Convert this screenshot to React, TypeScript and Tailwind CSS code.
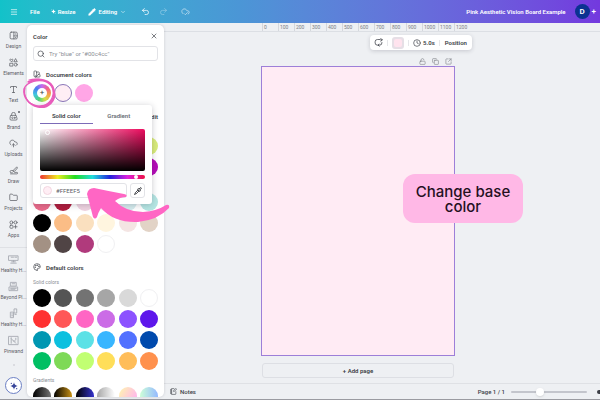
import {
    Clock, CloudCheck, CloudUpload, Copy, Folder, Menu, NotebookPen, Palette, Pencil, Pipette, Redo2, Search,
    SquareArrowOutUpRight, SwatchBook, ChevronDown, LockOpen, Type, Undo2, X
} from "lucide-react"
import { clsx } from "clsx"

type IconProps = { size?: number }

const Line: React.FC<IconProps & { children: React.ReactNode }> = ({ size = 9, children }) => (
    <svg width={size} height={size} viewBox="0 0 24 24" fill="none" stroke="currentColor" strokeWidth="2" strokeLinecap="round" strokeLinejoin="round">
        {children}
    </svg>
)

const DesignIcon = () => (
    <Line>
        <rect x="3" y="3" width="19" height="18" rx="3" />
        <path d="M13 3v18M13 13h9M17 8h1M17 17h1" />
    </Line>
)

const ElementsIcon = () => (
    <Line>
        <path d="M6.5 10L2.8 6.2C1 4 4 1.5 6.5 4C9 1.5 12 4 10.2 6.2ZM18 2.5l4 7.5h-8ZM3 14h7.5v7.5H3z" />
        <circle cx="18" cy="17.8" r="3.9" />
    </Line>
)

const BrandIcon = () => (
    <Line>
        <path d="M7 9V6a5 5 0 0 1 10 0v3M5 9h14l2.5 9a3 3 0 0 1-3 3.500H5.500a3 3 0 0 1-3-3.500Z" />
        <path d="M10.500 14a2 2 0 1 0 0 3" />
        <circle cx="15" cy="15.500" r="1.500" />
    </Line>
)

const DrawIcon = () => (
    <Line>
        <path d="M20 3l-8 8-1 4 4-1 7-8ZM10 12H6a3 3 0 0 0 0 6h3M4 21h17a2 2 0 0 0 0-4h-6" />
    </Line>
)

const AppsIcon = () => (
    <Line>
        <circle cx="6.500" cy="6.500" r="4" />
        <circle cx="17.500" cy="6.500" r="4" />
        <rect x="2.500" y="14" width="8" height="8" rx="2" />
        <path d="M17.500 14v8M13.500 18h8" />
    </Line>
)

const ReplaceIcon = () => (
    <Line size={9}>
        <path d="M15 4H9a6 6 0 0 0-6 6v3a6 6 0 0 0 6 6h3M18 1l4 4-4 4M22 5h-5M21 12v1a6 6 0 0 1-6 6h-3M14 16l-3 3 3 3" />
    </Line>
)

const Spark: React.FC<IconProps> = ({ size = 6 }) => (
    <svg width={size} height={size} viewBox="0 0 24 24" fill="currentColor">
        <path d="M12 1Q13.500 10.500 23 12Q13.500 13.500 12 23Q10.500 13.500 1 12Q10.500 10.500 12 1Z" />
        <circle cx="4" cy="4" r="2" />
        <circle cx="20" cy="20" r="2" />
    </svg>
)

type NavItem = {
    label: string
    icon: React.ReactNode
    badge?: boolean
}

const navItems: NavItem[] = [
    { label: "Design", icon: <DesignIcon /> },
    { label: "Elements", icon: <ElementsIcon /> },
    { label: "Text", icon: <Type size={9} /> },
    { label: "Brand", icon: <BrandIcon />, badge: true },
    { label: "Uploads", icon: <CloudUpload size={9} /> },
    { label: "Draw", icon: <DrawIcon /> },
    { label: "Projects", icon: <Folder size={9} /> },
    { label: "Apps", icon: <AppsIcon /> },
]

// faint page thumbnails of the recent designs
const recentItems = [
    { label: "Healthy H...", d: "M2 4h20v10H2zM7 7h5M15 7h4M8 17h8M6 20h12M12 14v3" },
    { label: "Beyond Pl...", d: "M6 3h12v8H6zM3 13h18v8H3zM9 6h6M6 16h12M6 18h9" },
    { label: "Healthy H...", d: "M14 2h5v9h-5zM6 9h6v12H6zM8 13h2M8 17h2M15 14h3" },
    { label: "Pinwand", d: "M2 3h20v18H2zM7 6v12M7 8l5 5 5 5M12 13h4M17 7v3" },
]

const swatchRows = {
    first: [
        ["#ffffff", "#ffffff", "#ffffff", "#ffffff", "#ffffff", "#d9ec7a"],
        ["#ffffff", "#ffffff", "#ffffff", "#ffffff", "#ffffff", "#b50cb8"],
    ],
    second: [
        ["#ea6a8a", "#b01c3c", "#efd3e0", "#fbe3ec", "#d5ecee", "#b5e6e3"],
        ["#000000", "#fbbd86", "#fae0bf", "#fff5df", "#f4e5e3", "#e2d3c6"],
        ["#a39184", "#504445", "#b03a7c", "#ffffff"],
    ],
    solid: [
        ["#000000", "#545454", "#737373", "#a6a6a6", "#d9d9d9", "#ffffff"],
        ["#ff3131", "#ff5757", "#ff66c4", "#cb6ce6", "#8c52ff", "#5e17eb"],
        ["#0097b2", "#0cc0df", "#5ce1e6", "#38b6ff", "#5271ff", "#004aad"],
        ["#00bf63", "#7ed957", "#c1ff72", "#ffde59", "#ffbd59", "#ff914d"],
    ],
    gradients: [[
        "linear-gradient(90deg,#000000,#737373)",
        "linear-gradient(90deg,#000000,#c89116)",
        "linear-gradient(90deg,#000000,#3533cd)",
        "linear-gradient(90deg,#a6a6a6,#ffffff)",
        "linear-gradient(120deg,#fff7ad,#ffa9f9)",
        "linear-gradient(90deg,#cdffd8,#94b9ff)",
    ]],
}

const rulerMarks = [0, 100, 200, 300, 400, 500, 600, 700, 800, 900, 1000, 1100, 1200]

const Swatches: React.FC<{ rows: string[][] }> = ({ rows }) => (
    <div className="flex flex-col gap-[3px]">
        {rows.map((row, index) => (
            <div key={index} className="grid grid-cols-[18px_18px_18px_18px_18px_18px] justify-between">
                {row.map((color, i) => (
                    <button
                        key={i}
                        aria-label={`Use ${color}`}
                        className={clsx("size-[18px] rounded-full", color === "#ffffff" && "border border-[#f0f0f2]")}
                        style={{ background: color }}
                    />
                ))}
            </div>
        ))}
    </div>
)

const Header = () => (
    <header className="flex h-[23px] shrink-0 items-center bg-linear-to-r from-[#12c2c9] via-[#4b96d6] via-40% to-[#7339de] pl-[10px] pr-1 text-[6px] font-semibold text-white">
        <button aria-label="Menu"><Menu size={8} /></button>
        <button className="ml-3">File</button>
        <button className="ml-[11px] flex items-center gap-[2px]"><Spark size={5} />Resize</button>
        <button className="ml-3 flex items-center gap-[3px]"><Pencil size={8} fill="white" />Editing<ChevronDown size={6} /></button>
        <button aria-label="Undo" className="ml-[15px]"><Undo2 size={9} /></button>
        <button aria-label="Redo" className="ml-[9px] opacity-40"><Redo2 size={9} /></button>
        <CloudCheck size={9} className="ml-[13px] opacity-70" />
        <h1 className="ml-auto">Pink Aesthetic Vision Board Example</h1>
        <button className="ml-[9px] size-[15px] rounded-full bg-[#0b3291] text-[8px]">D</button>
        <button aria-label="Add member" className="ml-[2px] text-[8px]">+</button>
    </header>
)

const Sidebar = () => (
    <nav className="flex w-[27px] shrink-0 flex-col items-center overflow-hidden pt-2 text-[5px] leading-[6px] text-[#5d6067]">
        {navItems.map(({ label, icon, badge }) => (
            <button key={label} className="relative flex h-[27px] shrink-0 flex-col items-center gap-[3px]">
                {icon}
                {label}
                {badge && <span className="absolute right-0 -top-px size-[2px] rounded-full bg-[#5d6067]" />}
            </button>
        ))}
        <hr className="w-full shrink-0 border-[#dfe1e5]" />
        <div className="flex flex-col items-center pt-[6px]">
            {recentItems.map(({ label, d }, index) => (
                <button key={index} className="flex h-[27px] shrink-0 flex-col items-center gap-[2px] whitespace-nowrap">
                    <span className="text-[#a9acb3]"><Line size={11}><path d={d} /></Line></span>
                    {label}
                </button>
            ))}
        </div>
        <span className="mt-[2px] size-[2px] shrink-0 rounded-full bg-[#d3d5da]" />
        <button aria-label="Assistant" className="mb-[5px] mt-auto flex size-[17px] shrink-0 items-center justify-center rounded-full border border-[#6b7fc4] bg-white text-[#39469a]">
            <Spark size={8} />
        </button>
    </nav>
)

const ColorPicker = () => (
    <div className="absolute left-[6px] top-20 z-10 w-[119px] rounded-[3px] bg-white px-[7px] pb-[6px] pt-1 shadow-[0_1px_6px_rgba(40,40,60,0.25)]">
        <div role="tablist" className="grid grid-cols-2 text-center text-[6px] font-semibold leading-[14px]">
            <button role="tab" aria-selected="true" className="border-b border-[#7c6bb8] text-[#3b3e45]">Solid color</button>
            <button role="tab" aria-selected="false" className="border-b border-transparent text-[#6c6f76]">Gradient</button>
        </div>
        <div className="mt-[5px] h-[42px] rounded-[2px] bg-[linear-gradient(to_top,#000,transparent),linear-gradient(to_right,#fff,#ec0b5e)] p-px">
            <span className="block size-[5px] translate-x-1 rounded-full border border-white" />
        </div>
        <input
            type="range"
            aria-label="Hue"
            min={0}
            max={360}
            defaultValue={335}
            className="mt-1 block h-[4px] w-full appearance-none rounded-full bg-[linear-gradient(90deg,#e33,#ee2,#2d2,#2dd,#22d,#d2d,#e14)] [&::-webkit-slider-thumb]:size-[4px] [&::-webkit-slider-thumb]:appearance-none [&::-webkit-slider-thumb]:rounded-full [&::-webkit-slider-thumb]:bg-white"
        />
        <div className="mt-1 flex gap-[3px]">
            <label className="flex h-[15px] min-w-0 flex-1 items-center gap-1 rounded-[3px] border border-[#e2e3e7] px-[2px]">
                <span className="size-[9px] shrink-0 rounded-full border border-[#f3d6e0] bg-[#ffeef5]" />
                <input aria-label="Hex color" defaultValue="#FFEEF5" className="w-full min-w-0 text-[6px] text-[#5d6067] outline-none" />
            </label>
            <button aria-label="Pick a color" className="flex size-[15px] items-center justify-center rounded-[3px] border border-[#e2e3e7] text-[#22242a]">
                <Pipette size={8} strokeWidth={2.5} />
            </button>
        </div>
    </div>
)

const Arrow = () => (
    <svg viewBox="0 0 84 36" className="absolute left-[59px] top-[162px] z-20 h-9 w-[84px]" fill="#ff66c4">
        <path d="M1 7Q2 1 8 1Q22 4 38 7Q42 8 40 10Q34 10 29 14Q40 25 57 25Q71 24 80 18Q84 17 83 21Q72 33 52 35Q28 36 15 21Q12 26 11 30Q9 33 7 30Q4 18 1 7Z" />
    </svg>
)

const Scribble = () => (
    <svg viewBox="0 0 36 34" className="absolute -left-[5px] top-[52px] z-20 h-[34px] w-9" fill="none" stroke="#e85cbb" strokeLinecap="round">
        <path strokeWidth="1.5" d="M6 5C15 0 30 2 32 13C35 24 26 32 16 30C6 28 1 19 2 12C5 4 17 2 25 5C34 10 34 22 26 27C19 31 9 29 5 23" />
        <path strokeWidth="1.2" d="M7 3C15 1 27 3 30 10C33 17 30 26 21 29M3 11C1 19 6 26 12 28" />
    </svg>
)

const ColorPanel = () => (
    <aside className="relative mb-[2px] mt-[2px] w-[137px] shrink-0">
        <div className="flex h-full flex-col overflow-hidden rounded-[5px] bg-white px-[6px] pt-[6px] text-[6px] text-[#3b3e45] shadow-[0_0_3px_rgba(40,40,60,0.18)]">
            <div className="flex h-[10px] shrink-0 items-center justify-between">
                <h2 className="font-semibold">Color</h2>
                <button aria-label="Close"><X size={8} /></button>
            </div>
            <label className="mt-[5px] flex h-[15px] shrink-0 items-center gap-1 rounded-[3px] border border-[#e2e3e7] px-[3px]">
                <Search size={8} className="shrink-0" />
                <input aria-label="Search colors" placeholder={"Try \"blue\" or \"#00c4cc\""} className="w-full min-w-0 outline-none placeholder:text-[#8c8f96]" />
            </label>
            <h3 className="mt-2 flex h-[10px] shrink-0 items-center gap-[5px] font-semibold"><SwatchBook size={8} />Document colors</h3>
            <div className="mt-[5px] flex shrink-0 gap-[3px]">
                <button aria-label="Add a color" className="flex size-[18px] items-center justify-center rounded-full bg-[conic-gradient(#c46bf0,#f0628a,#f5a04a,#d5e04a,#4fd07a,#3fc6e0,#4a7cf0,#c46bf0)]">
                    <span className="flex size-[10px] items-center justify-center rounded-full bg-white text-[8px] leading-none">+</span>
                </button>
                <button aria-label="Use #ffeef5" className="size-[18px] rounded-full border border-[#8a76b8] bg-[#ffeef5]" />
                <button aria-label="Use #ffa6e6" className="size-[18px] rounded-full bg-[#ffa6e6]" />
            </div>
            <button className="mt-[9px] h-[10px] shrink-0 self-end font-semibold">Edit</button>
            <div className="mt-4 shrink-0"><Swatches rows={swatchRows.first} /></div>
            <div className="mt-[17px] shrink-0"><Swatches rows={swatchRows.second} /></div>
            <h3 className="mt-[9px] flex h-[10px] shrink-0 items-center gap-[5px] font-semibold"><Palette size={8} />Default colors</h3>
            <h4 className="mt-[5px] h-[10px] shrink-0 text-[5px] leading-[10px] text-[#8c8f96]">Solid colors</h4>
            <div className="mt-[2px] shrink-0"><Swatches rows={swatchRows.solid} /></div>
            <h4 className="mt-[5px] h-[10px] shrink-0 text-[5px] leading-[10px] text-[#8c8f96]">Gradients</h4>
            <div className="mt-[2px] shrink-0"><Swatches rows={swatchRows.gradients} /></div>
        </div>
        <ColorPicker />
        <Scribble />
        <Arrow />
    </aside>
)

const Toolbar = () => (
    <div className="flex h-[15px] items-center gap-[4px] rounded-[4px] bg-white px-1 text-[6px] font-semibold text-[#3b3e45] shadow-[0_1px_4px_rgba(40,40,60,0.2)]">
        <button aria-label="Replace"><ReplaceIcon /></button>
        <span className="h-[6px] w-px bg-[#e6e7ea]" />
        <button aria-label="Background color" className="flex size-[12px] items-center justify-center rounded-[3px] bg-[#e6dfe6]">
            <span className="size-[8px] rounded-[2px] bg-[#ffe3ee]" />
        </button>
        <span className="h-[6px] w-px bg-[#e6e7ea]" />
        <button className="flex items-center gap-[2px]"><Clock size={8} />5.0s</button>
        <span className="h-[6px] w-px bg-[#e6e7ea]" />
        <button className="px-px">Position</button>
    </div>
)

const Canvas = () => (
    <main className="flex min-w-0 flex-1 flex-col">
        <div className="flex h-[9px] shrink-0 border-b border-[#dcdfe4] pl-[98px] text-[5px] leading-[8px] text-[#7d8087]">
            {rulerMarks.map(mark => (
                <span key={mark} className="w-4 shrink-0 border-l border-[#d5d8dd] pl-px">{mark}</span>
            ))}
        </div>
        <div className="flex min-h-0 flex-1 flex-col items-center pr-12">
            <div className="ml-[126px] mt-[3px]"><Toolbar /></div>
            <div className="mt-2 flex w-[194px] justify-end gap-[6px] pr-[3px] text-[#7d8087]">
                <LockOpen size={7} /><Copy size={7} /><SquareArrowOutUpRight size={7} />
            </div>
            <div className="relative mt-px w-[194px] flex-1 border border-[#9d7fd8] bg-[#ffebf4]">
                <p className="absolute left-[141px] top-[107px] flex h-[49px] w-[120px] items-center justify-center rounded-[12px] bg-[#ffb8e6] text-center font-['Inter',sans-serif] text-[15px] font-medium leading-[15px] text-[#24101e]">
                    Change base<br />color
                </p>
            </div>
            <button className="mb-[5px] mt-[7px] h-[15px] w-48 rounded-[3px] border border-[#dddfe4] text-[6px] font-semibold text-[#3b3e45]">+ Add page</button>
        </div>
        <footer className="flex h-4 shrink-0 items-center border-t border-[#dfe1e5] pl-[6px] text-[6px] font-medium text-[#3b3e45]">
            <button className="flex items-center gap-[3px]"><NotebookPen size={7} />Notes</button>
            <span className="ml-auto">Page 1 / 1</span>
            <input type="range" aria-label="Zoom" defaultValue={37} className="ml-[6px] h-[2px] w-[76px] appearance-none rounded-full bg-[#c3c5cc] [&::-webkit-slider-thumb]:size-2 [&::-webkit-slider-thumb]:appearance-none [&::-webkit-slider-thumb]:rounded-full [&::-webkit-slider-thumb]:bg-white [&::-webkit-slider-thumb]:shadow" />
            <span className="ml-[10px] h-1 w-[3px] rounded-l-full bg-[#3b3e45]" />
        </footer>
    </main>
)

export default function App() {
    return (
        <div className="flex h-screen flex-col overflow-hidden border-b border-[#9a9ba1] bg-[#eef0f3] font-['Roboto',sans-serif]">
            <Header />
            <div className="flex min-h-0 flex-1">
                <Sidebar />
                <ColorPanel />
                <Canvas />
            </div>
        </div>
    )
}
